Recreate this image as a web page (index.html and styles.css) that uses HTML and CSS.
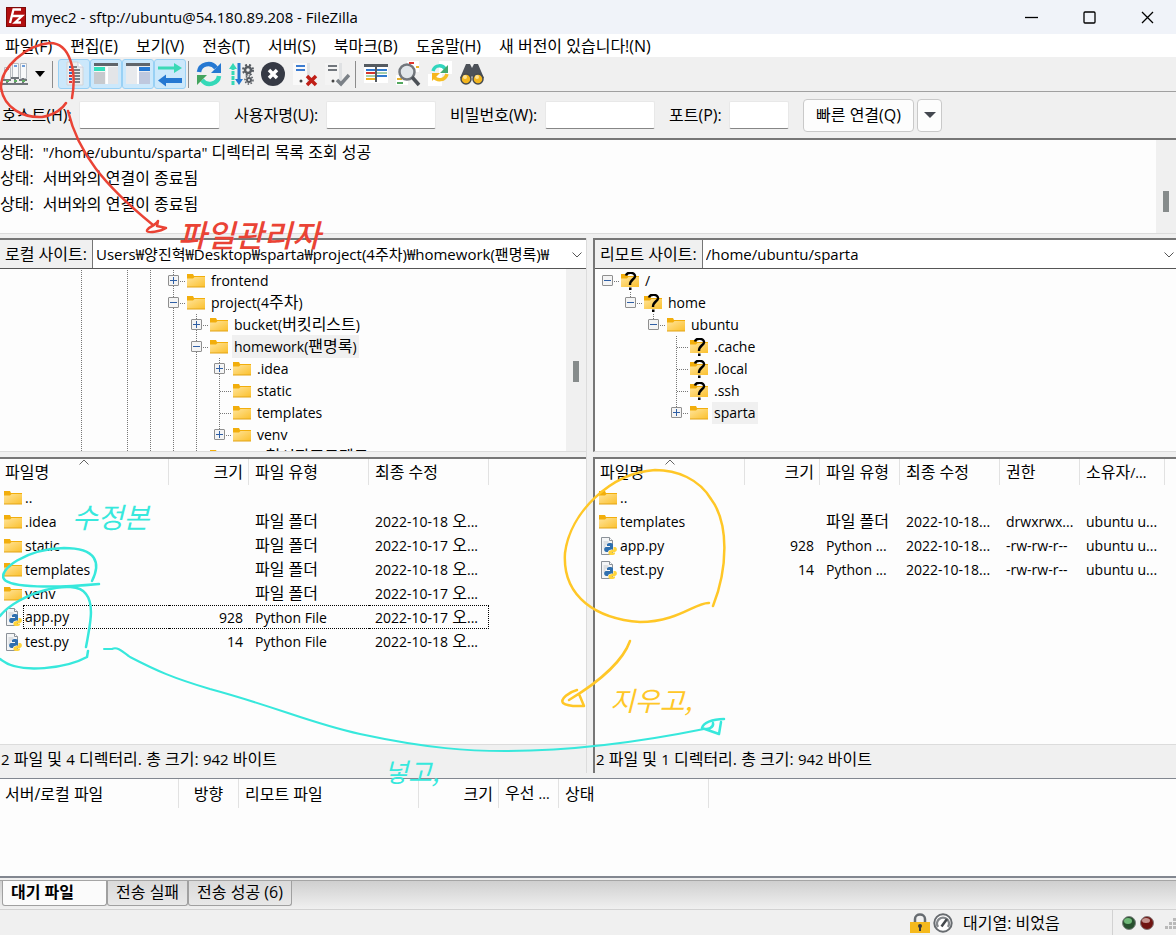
FILE: index.html
```html
<!DOCTYPE html>
<html lang="ko">
<head>
<meta charset="utf-8">
<title>myec2 - FileZilla</title>
<link rel="stylesheet" href="styles.css">
</head>
<body>
<svg class="defs" aria-hidden="true">
  <defs>
    <linearGradient id="fold" x1="0" y1="0" x2="1" y2="1"><stop offset="0" stop-color="#ffe49a"/><stop offset="1" stop-color="#fbc02d"/></linearGradient>
  </defs>
  <symbol id="i-folder" viewBox="0 0 18 16"><path d="M0 1h6l1 2h11v3H0z" fill="#f2ae0c"/><path d="M0 5.500h6l1.500-1.500H18V14H0z" fill="url(#fold)"/><path d="M0 14h18" stroke="#e3a417" stroke-width="1"/></symbol>
  <symbol id="i-unknown" viewBox="0 0 18 18"><path d="M0 2h6l1 2h11v3H0z" fill="#f2ae0c"/><path d="M0 6.500h6L7.500 5H18v10H0z" fill="url(#fold)"/><path d="M5 3.500C6 -.5 14.500 0 14 4.500C13.500 7.500 9 7.500 9 13" fill="none" stroke="#000" stroke-width="2.400"/><path d="M8 15.500h2.500v2.500H8z"/></symbol>
  <symbol id="i-python" viewBox="0 0 18 18"><path d="M2.500.5h8l3 3v14h-11z" fill="#f4f5f6" stroke="#8b9198"/><path d="M10.500.5v3h3" fill="#fff" stroke="#8b9198"/><path d="M4.500 5h5M4.500 7h4M4.500 9h2M4.500 11h2" stroke="#c5c9cd"/><path d="M8 7.500c0-2 6-2 6 0v4c0 1.500-5 .5-5 3.500H7.500C4.500 15 4.500 10.500 7 10h4V9H8z" fill="#2f6fae"/><path d="M14.500 10H16c2.500 0 2.500 4.500 0 5h-3v.6h3v1c0 2-6.500 2-6.500 0v-1.500c0-2.500 5-1.500 5-3.100z" fill="#ffd43b"/></symbol>
</svg>

<header class="titlebar">
  <svg class="logo" width="20" height="20" viewBox="0 0 20 20"><rect width="20" height="20" fill="#b30f10"/><rect x=".5" y=".5" width="19" height="19" fill="none" stroke="#7e0a0a"/><path d="M15 2.500H7.500L4 16M5.500 9h6M10 9h6l-7 6.500h6" fill="none" stroke="#fff" stroke-width="2.300"/></svg>
  <h1>myec2 - sftp://ubuntu@54.180.89.208 - FileZilla</h1>
  <div class="window-buttons">
    <button aria-label="최소화"><svg width="13" height="13" viewBox="0 0 13 13"><path d="M0 6.500h13"/></svg></button>
    <button aria-label="최대화"><svg width="13" height="13" viewBox="0 0 13 13"><rect x="1" y="1" width="11" height="11" rx="1"/></svg></button>
    <button aria-label="닫기"><svg width="13" height="13" viewBox="0 0 13 13"><path d="M1 1l11 11M12 1L1 12"/></svg></button>
  </div>
</header>

<nav class="menubar">
  <button>파일(F)</button>
  <button>편집(E)</button>
  <button>보기(V)</button>
  <button>전송(T)</button>
  <button>서버(S)</button>
  <button>북마크(B)</button>
  <button>도움말(H)</button>
  <button>새 버전이 있습니다!(N)</button>
</nav>

<div class="toolbar">
  <button class="site" aria-label="사이트 관리자"><svg width="26" height="26" viewBox="0 0 26 26"><g fill="#f8f9fa" stroke="#b9bdc2"><path d="M2.500 6.500h6v12h-6zM10.500 2.500h6v14h-6zM18.500 2.500h6v15h-6z"/></g><path d="M4 8h3M12 5h3M20 5h3" stroke="#3f7fd0" stroke-width="1.500"/><path d="M5 18v5M13 16v7M21 17v6M0 23h26M1 19h8M9 17h8M17 19h8" stroke="#70757a" stroke-width="2"/><path d="M4 20h3M12 20h3M20 20h3" stroke="#60ad62" stroke-width="2"/></svg></button>
  <button class="caret" aria-label="사이트 목록"><svg width="10" height="6" viewBox="0 0 10 6"><path d="M0 0h10L5 6z"/></svg></button>
  <span class="sep"></span>
  <button class="tool on" aria-label="메시지 로그"><svg width="26" height="26" viewBox="0 0 26 26"><path d="M6 1h11l5 5v18H6z" fill="#eceef0" stroke="#d0d4d8"/><path d="M17 1v5h5" fill="#fff" stroke="#ccd"/><path d="M8 6h3M8 12h3M8 18h3" stroke="#2b73c4" stroke-width="2"/><path d="M8 9h3M8 15h3M8 21h3" stroke="#d33" stroke-width="2"/><path d="M12 6h4M12 9h7M12 12h7M12 15h7M12 18h7M12 21h7" stroke="#555b61" stroke-width="1.500"/></svg></button>
  <button class="tool on" aria-label="로컬 트리"><svg width="26" height="26" viewBox="0 0 26 26"><rect x="1" y="2" width="24" height="21" fill="#f5f5f5"/><path d="M1 2h24v3H1z" fill="#5f656b"/><path d="M1 6h11v4H1z" fill="#35e0bd"/><path d="M1 11h11v12H1z" fill="#c7cace"/><path d="M13 6h12v17H13z" fill="#e3e5e8"/><path d="M14 6v17" stroke="#fff" stroke-width="2"/></svg></button>
  <button class="tool on" aria-label="원격 트리"><svg width="26" height="26" viewBox="0 0 26 26"><rect x="1" y="2" width="24" height="21" fill="#e8eaed"/><path d="M1 2h24v3H1z" fill="#5f656b"/><path d="M14 6h11v4H14z" fill="#2578d2"/><path d="M14 11h11v12H14z" fill="#bfc8de"/><path d="M13 6v17" stroke="#fff" stroke-width="2"/></svg></button>
  <button class="tool on" aria-label="전송 대기열"><svg width="26" height="26" viewBox="0 0 26 26"><path d="M1 5.500h16V2l8 5-8 5V8.500H1z" fill="#3bd9b6"/><path d="M25 17H9v-3.500l-8 6 8 6V22h16z" fill="#2578d2"/></svg></button>
  <span class="sep"></span>
  <button class="tool" aria-label="새로 고침"><svg width="26" height="26" viewBox="0 0 26 26"><path d="M3 11C4 3 15 0 20 7" fill="none" stroke="#2578d2" stroke-width="4.500"/><path d="M25 2v10H15z" fill="#2578d2"/><path d="M23 15c-1 8-12 11-17 4" fill="none" stroke="#35d9b8" stroke-width="4.500"/><path d="M1 24V14h10z" fill="#44a55e"/></svg></button>
  <button class="tool" aria-label="대기열 처리"><svg width="26" height="26" viewBox="0 0 26 26"><path d="M5 24V6" stroke="#35d9b6" stroke-width="3" stroke-dasharray="4 1"/><path d="M1 8l4-6 4 6z" fill="#35d9b6"/><path d="M11 2v17" stroke="#2578d2" stroke-width="3"/><path d="M7 18h8l-4 6z" fill="#2578d2"/><g fill="none" stroke="#565b61"><circle cx="20" cy="9" r="3" stroke-width="2.500"/><circle cx="20" cy="9" r="5" stroke-width="2" stroke-dasharray="2 2"/><circle cx="21" cy="19" r="2" stroke-width="2"/><circle cx="21" cy="19" r="4" stroke-width="1.500" stroke-dasharray="1.500 1.500"/></g></svg></button>
  <button class="tool" aria-label="취소"><svg width="26" height="26" viewBox="0 0 26 26"><circle cx="13" cy="13" r="12" fill="#363a45"/><path d="M9 9l8 8M17 9l-8 8" stroke="#fff" stroke-width="3.500"/></svg></button>
  <button class="tool" aria-label="연결 끊기"><svg width="26" height="26" viewBox="0 0 26 26"><path d="M1 2h17v22H1z" fill="#f9f9f9"/><path d="M15 2h3v22h-3z" fill="#e0e2e4"/><path d="M4 5h9M4 9h9" stroke="#3b7bd0" stroke-width="2"/><circle cx="9" cy="20" r="1.500" fill="#444"/><path d="M15 15l9 9M24 15l-9 9" stroke="#c01f17" stroke-width="3.500"/></svg></button>
  <button class="tool" aria-label="다시 연결"><svg width="26" height="26" viewBox="0 0 26 26"><path d="M1 2h17v22H1z" fill="#f4f4f4"/><path d="M15 2h3v22h-3z" fill="#dfe1e3"/><path d="M4 5h9M4 9h9" stroke="#71767c" stroke-width="2"/><circle cx="9" cy="20" r="1.500" fill="#444"/><path d="M13 19l4 4 8-9" fill="none" stroke="#7b8187" stroke-width="3.500"/></svg></button>
  <span class="sep"></span>
  <button class="tool" aria-label="필터"><svg width="26" height="26" viewBox="0 0 26 26"><path d="M1 3h24v19H1z" fill="#fff"/><path d="M1 3h24v3H1z" fill="#555b61"/><path d="M3 9h9M14 9h10M14 15h10" stroke="#2f79cf" stroke-width="2"/><path d="M3 12h9" stroke="#d5352d" stroke-width="2"/><path d="M3 18h9" stroke="#f0b020" stroke-width="2"/><path d="M3 15h9M14 12h10" stroke="#4a9e5b" stroke-width="1"/><path d="M13 3v18" stroke="#555b61" stroke-width="2"/></svg></button>
  <button class="tool" aria-label="디렉터리 비교"><svg width="26" height="26" viewBox="0 0 26 26"><path d="M12 0h12v11H12zM1 14h12v10H1z" fill="#fff"/><path d="M14 2h5" stroke="#e0352d" stroke-width="2"/><path d="M21 6h3M2 18h5" stroke="#eab22b" stroke-width="2"/><path d="M2 22h6" stroke="#53a85f" stroke-width="2"/><circle cx="12" cy="11" r="7.500" fill="#e1e6ea" stroke="#72777d" stroke-width="2.500"/><path d="M17 16l7 8" stroke="#4c5157" stroke-width="3.500"/></svg></button>
  <button class="tool" aria-label="동기화 탐색"><svg width="26" height="26" viewBox="0 0 26 26"><path d="M12 0h13v13H12zM1 13h14v12H1z" fill="#fff"/><path d="M6 10c2-7 10-6 12-2" fill="none" stroke="#31d6be" stroke-width="3.500"/><path d="M21 4v8h-8z" fill="#44aa70"/><path d="M20 13c-2 7-10 7-13 3" fill="none" stroke="#f6bf26" stroke-width="3.500"/><path d="M5 20v-8h8z" fill="#f6b51d"/></svg></button>
  <button class="tool" aria-label="파일 찾기"><svg width="26" height="26" viewBox="0 0 26 26"><path d="M1 17L7 3h4l2 4 2-4h4l6 14-8 3-4-5-4 5z" fill="#4c5158"/><circle cx="7" cy="18" r="5" fill="#f3b61f" stroke="#454a50" stroke-width="1.500"/><circle cx="19" cy="18" r="5" fill="#f3b61f" stroke="#454a50" stroke-width="1.500"/><circle cx="6" cy="16" r="2" fill="#ffe394"/><circle cx="18" cy="16" r="2" fill="#ffe394"/></svg></button>
</div>

<form class="quick">
  <label class="l1" for="host">호스트(H):</label><input id="host" class="w-host" type="text">
  <label class="l2" for="user">사용자명(U):</label><input id="user" class="w-mid" type="text">
  <label class="l3" for="pass">비밀번호(W):</label><input id="pass" class="w-mid" type="password">
  <label class="l4" for="port">포트(P):</label><input id="port" class="w-port" type="text">
  <button type="button" class="connect">빠른 연결(Q)</button>
  <button type="button" class="history" aria-label="최근 서버"><svg width="12" height="6" viewBox="0 0 12 6"><path d="M0 0h12L6 6z" fill="#444850"/></svg></button>
</form>

<section class="log" aria-label="메시지 로그">
  <div class="log-lines">
    <p><span>상태:</span><span><span class="en15">"/home/ubuntu/sparta"</span> 디렉터리 목록 조회 성공</span></p>
    <p><span>상태:</span><span>서버와의 연결이 종료됨</span></p>
    <p><span>상태:</span><span>서버와의 연결이 종료됨</span></p>
  </div>
  <div class="scroll low"><i></i></div>
</section>

<main class="panes">
  <section class="pane">
    <div class="site-box">
      <div class="address">
        <label for="local">로컬 사이트:</label>
        <select id="local"><option>Users₩양진혁₩Desktop₩sparta₩project(4주차)₩homework(팬명록)₩</option></select>
        <svg width="10" height="6" viewBox="0 0 10 6"><path d="M.5.500L5 5 9.500.5"/></svg>
      </div>
      <div class="tree-wrap">
        <ul class="tree local">
          <li><b class="v"></b><b></b><b class="v"></b><b class="v"></b><b class="v h"><button class="plus" aria-label="펼치기"></button></b><svg class="ic"><use href="#i-folder"/></svg><span class="en">frontend</span></li>
          <li><b class="v"></b><b></b><b class="v"></b><b class="v"></b><b class="v h"><button aria-label="접기"></button></b><svg class="ic"><use href="#i-folder"/></svg><span><span class="en">project(4</span>주차<span class="en">)</span></span></li>
          <li><b class="v"></b><b></b><b class="v"></b><b class="v"></b><b class="v"></b><b class="v h"><button class="plus" aria-label="펼치기"></button></b><svg class="ic"><use href="#i-folder"/></svg><span><span class="en">bucket(</span>버킷리스트<span class="en">)</span></span></li>
          <li><b class="v"></b><b></b><b class="v"></b><b class="v"></b><b class="v"></b><b class="v h"><button aria-label="접기"></button></b><svg class="ic"><use href="#i-folder"/></svg><span class="sel"><span class="en">homework(</span>팬명록<span class="en">)</span></span></li>
          <li><b class="v"></b><b></b><b class="v"></b><b class="v"></b><b class="v"></b><b class="v"></b><b class="v h"><button class="plus" aria-label="펼치기"></button></b><svg class="ic"><use href="#i-folder"/></svg><span class="en">.idea</span></li>
          <li><b class="v"></b><b></b><b class="v"></b><b class="v"></b><b class="v"></b><b class="v"></b><b class="v h"></b><svg class="ic"><use href="#i-folder"/></svg><span class="en">static</span></li>
          <li><b class="v"></b><b></b><b class="v"></b><b class="v"></b><b class="v"></b><b class="v"></b><b class="v h"></b><svg class="ic"><use href="#i-folder"/></svg><span class="en">templates</span></li>
          <li><b class="v"></b><b></b><b class="v"></b><b class="v"></b><b class="v"></b><b class="v"></b><b class="end h"><button class="plus" aria-label="펼치기"></button></b><svg class="ic"><use href="#i-folder"/></svg><span class="en">venv</span></li>
          <li><b class="v"></b><b></b><b class="v"></b><b class="v"></b><b class="v"></b><b class="end h"></b><svg class="ic"><use href="#i-folder"/></svg><span><span class="en">aws_</span>첫시작프로젝트</span></li>
        </ul>
        <div class="scroll mid"><i></i></div>
      </div>
    </div>
    <div class="list-box">
      <div class="list">
        <table class="files t-local">
          <colgroup><col class="c169"><col class="c80"><col class="c120"><col class="c120"></colgroup>
          <thead><tr><th>파일명<svg class="sort" width="10" height="6" viewBox="0 0 10 6"><path d="M.5 5.500L5 1l4.500 4.500"/></svg></th><th class="num">크기</th><th>파일 유형</th><th>최종 수정</th></tr></thead>
          <tbody>
            <tr><td><svg class="ic"><use href="#i-folder"/></svg><span class="en">..</span></td><td></td><td></td><td></td></tr>
            <tr><td><svg class="ic"><use href="#i-folder"/></svg><span class="en">.idea</span></td><td></td><td>파일 폴더</td><td><span class="en">2022-10-18</span> 오<span class="en">...</span></td></tr>
            <tr><td><svg class="ic"><use href="#i-folder"/></svg><span class="en">static</span></td><td></td><td>파일 폴더</td><td><span class="en">2022-10-17</span> 오<span class="en">...</span></td></tr>
            <tr><td><svg class="ic"><use href="#i-folder"/></svg><span class="en">templates</span></td><td></td><td>파일 폴더</td><td><span class="en">2022-10-18</span> 오<span class="en">...</span></td></tr>
            <tr><td><svg class="ic"><use href="#i-folder"/></svg><span class="en">venv</span></td><td></td><td>파일 폴더</td><td><span class="en">2022-10-17</span> 오<span class="en">...</span></td></tr>
            <tr class="focus"><td><svg class="ic"><use href="#i-python"/></svg><span class="en">app.py</span></td><td class="num"><span class="en">928</span></td><td><span class="en">Python File</span></td><td><span class="en">2022-10-17</span> 오<span class="en">...</span></td></tr>
            <tr><td><svg class="ic"><use href="#i-python"/></svg><span class="en">test.py</span></td><td class="num"><span class="en">14</span></td><td><span class="en">Python File</span></td><td><span class="en">2022-10-18</span> 오<span class="en">...</span></td></tr>
          </tbody>
        </table>
      </div>
      <p class="summary"><span class="en15">2</span> 파일 및 <span class="en15">4</span> 디렉터리. 총 크기: <span class="en15">942</span> 바이트</p>
    </div>
  </section>

  <section class="pane remote">
    <div class="site-box">
      <div class="address">
        <label for="remote">리모트 사이트:</label>
        <select id="remote"><option>/home/ubuntu/sparta</option></select>
        <svg width="10" height="6" viewBox="0 0 10 6"><path d="M.5.500L5 5 9.500.5"/></svg>
      </div>
      <div class="tree-wrap">
        <ul class="tree">
          <li><b class="h"><button aria-label="접기"></button></b><svg class="ic"><use href="#i-unknown"/></svg><span class="en">/</span></li>
          <li><b></b><b class="end h"><button aria-label="접기"></button></b><svg class="ic"><use href="#i-unknown"/></svg><span class="en">home</span></li>
          <li><b></b><b></b><b class="end h"><button aria-label="접기"></button></b><svg class="ic"><use href="#i-folder"/></svg><span class="en">ubuntu</span></li>
          <li><b></b><b></b><b></b><b class="v h"></b><svg class="ic"><use href="#i-unknown"/></svg><span class="en">.cache</span></li>
          <li><b></b><b></b><b></b><b class="v h"></b><svg class="ic"><use href="#i-unknown"/></svg><span class="en">.local</span></li>
          <li><b></b><b></b><b></b><b class="v h"></b><svg class="ic"><use href="#i-unknown"/></svg><span class="en">.ssh</span></li>
          <li><b></b><b></b><b></b><b class="end h"><button class="plus" aria-label="펼치기"></button></b><svg class="ic"><use href="#i-folder"/></svg><span class="en sel">sparta</span></li>
        </ul>
      </div>
    </div>
    <div class="list-box">
      <div class="list">
        <table class="files t-remote">
          <colgroup><col class="c150"><col class="c75"><col class="c80"><col class="c100"><col class="c80"><col class="c85"></colgroup>
          <thead><tr><th>파일명<svg class="sort" width="10" height="6" viewBox="0 0 10 6"><path d="M.5 5.500L5 1l4.500 4.500"/></svg></th><th class="num">크기</th><th>파일 유형</th><th>최종 수정</th><th>권한</th><th>소유자<span class="en">/...</span></th></tr></thead>
          <tbody>
            <tr><td><svg class="ic"><use href="#i-folder"/></svg><span class="en">..</span></td><td></td><td></td><td></td><td></td><td></td></tr>
            <tr><td><svg class="ic"><use href="#i-folder"/></svg><span class="en">templates</span></td><td></td><td>파일 폴더</td><td><span class="en">2022-10-18...</span></td><td><span class="en">drwxrwx...</span></td><td><span class="en">ubuntu u...</span></td></tr>
            <tr><td><svg class="ic"><use href="#i-python"/></svg><span class="en">app.py</span></td><td class="num"><span class="en">928</span></td><td><span class="en">Python ...</span></td><td><span class="en">2022-10-18...</span></td><td><span class="en">-rw-rw-r--</span></td><td><span class="en">ubuntu u...</span></td></tr>
            <tr><td><svg class="ic"><use href="#i-python"/></svg><span class="en">test.py</span></td><td class="num"><span class="en">14</span></td><td><span class="en">Python ...</span></td><td><span class="en">2022-10-18...</span></td><td><span class="en">-rw-rw-r--</span></td><td><span class="en">ubuntu u...</span></td></tr>
          </tbody>
        </table>
      </div>
      <p class="summary"><span class="en15">2</span> 파일 및 <span class="en15">1</span> 디렉터리. 총 크기: <span class="en15">942</span> 바이트</p>
    </div>
  </section>
</main>

<section class="queue">
  <table class="files t-queue">
    <colgroup><col class="c179"><col class="c60"><col class="c180"><col class="c80"><col class="c60"><col class="c150"></colgroup>
    <thead><tr><th>서버/로컬 파일</th><th class="mid">방향</th><th>리모트 파일</th><th class="num">크기</th><th>우선 <span class="en">...</span></th><th>상태</th></tr></thead>
  </table>
</section>

<div class="tabs" role="tablist">
  <button role="tab" aria-selected="true">대기 파일</button>
  <button role="tab" aria-selected="false">전송 실패</button>
  <button role="tab" aria-selected="false">전송 성공 (6)</button>
</div>

<footer class="statusbar">
  <svg width="20" height="20" viewBox="0 0 20 20"><path d="M5 9V6c0-6 10-6 10 0v3" fill="none" stroke="#666b70" stroke-width="2.500"/><path d="M0 9h20v11H0z" fill="#f5b91c"/><circle cx="10" cy="13" r="2" fill="#3b3b3b"/><path d="M10 13v5" stroke="#3b3b3b" stroke-width="2"/></svg>
  <svg width="20" height="20" viewBox="0 0 20 20"><circle cx="10" cy="10" r="8.700" fill="#fff" stroke="#686c70" stroke-width="2"/><path d="M5 14A6 6 0 1 1 15 14" fill="none" stroke="#85898d" stroke-width="2.500"/><path d="M8.500 13.500L14 6" stroke="#44484c" stroke-width="2.500"/></svg>
  <span class="queue-state">대기열: 비었음</span>
  <span class="lights">
    <svg width="14" height="14" viewBox="0 0 14 14"><circle cx="7" cy="7" r="6.500" fill="#28502f" stroke="#7d8280"/><ellipse cx="6" cy="5" rx="4" ry="3" fill="#6fb878"/></svg>
    <svg width="14" height="14" viewBox="0 0 14 14"><circle cx="7" cy="7" r="6.500" fill="#701512" stroke="#857a7a"/><ellipse cx="6" cy="4.500" rx="4" ry="2.500" fill="#c59590"/></svg>
  </span>
  <svg width="12" height="12" viewBox="0 0 12 12"><path d="M9 1h3v3H9zM5 5h3v3H5zM9 5h3v3H9zM1 9h3v3H1zM5 9h3v3H5zM9 9h3v3H9z" fill="#b9b9b9"/></svg>
</footer>

<svg class="notes" width="760" height="820" viewBox="0 0 760 820">
  <g stroke="#ea4335" stroke-width="2.500">
    <path d="M72 98C77 71 70 43 50 43C26 45 0 68 1 88C4 108 23 118 42 117C55 115 63 108 66 103"/>
    <path d="M68 111C78 153 104 185 153 225M158 221L157 226L166 228C160 232 148 233 147 231C146 228 155 226 158 221"/>
  </g>
  <text class="ink red" x="178" y="247">파일관리자</text>
  <g stroke="#37e8dc" stroke-width="2.500">
    <path d="M92 581C101 563 97 548 64 548C25 549-2 570 4 579C10 588 55 588 99 584"/>
    <path d="M0 616C18 593 75 577 86 594C94 604 91 621 86 647M0 659C20 676 69 667 87 657L88 651"/>
    <path stroke-width="2" d="M104 649L112 649C118 646 124 653 130 657C157 671 173 678 210 689C280 708 310 723 360 734C430 749 470 751 505 751C570 751 640 742 704 729"/>
    <path d="M724 719C712 719 703 723 702 728C708 731 714 727 713 723M702 728L719 734L721 722"/>
  </g>
  <text class="ink teal" x="72" y="528">수정본</text>
  <text class="ink teal small" x="384" y="782">넣고,</text>
  <g stroke="#ffc727" stroke-width="2.500">
    <path d="M713 606C728 568 729 523 711 499C699 479 677 470 655 470C610 473 570 513 565 553C562 598 598 619 640 622C678 622 696 602 709 603"/>
    <path d="M630 641C624 658 604 679 569 700M577 690C569 692 560 699 563 703C568 707 576 706 584 706L579 694"/>
  </g>
  <text class="ink gold" x="610" y="711">지우고,</text>
</svg>
</body>
</html>
```
FILE: styles.css
```css
* { box-sizing: border-box; }
body {
  margin: 0;
  min-height: 100vh;
  display: flex;
  flex-direction: column;
  position: relative;
  overflow-x: hidden;
  background: #f0f0f0;
  color: #000;
  font: 16px/20px "Open Sans", "Noto Sans CJK KR", sans-serif;
}
p, ul, h1 { margin: 0; padding: 0; }
button, input, select { font: inherit; color: inherit; }
button { border: 0; padding: 0; background: none; white-space: nowrap; }
svg { display: block; flex: none; }
.en { font-size: 14px; }
.en15 { font-size: 15px; }
.defs { position: absolute; width: 0; height: 0; }

.titlebar { height: 34px; display: flex; align-items: center; padding-left: 6px; background: #f0f3f9; }
.titlebar h1 { flex: 1; margin-left: 5px; font-size: 15px; font-weight: 400; }
.window-buttons { display: flex; }
.window-buttons button { width: 58px; height: 30px; display: flex; justify-content: center; align-items: center; }
.window-buttons svg { fill: none; stroke: #000; stroke-width: 1.3; }

.menubar { height: 23px; display: flex; align-items: center; gap: 18px; padding-left: 5px; background: #fff; }

.toolbar { height: 35px; display: flex; align-items: center; border-bottom: 1px solid #a0a0a0; }
.toolbar button { height: 30px; display: flex; align-items: center; justify-content: center; }
.site { width: 30px; }
.caret { width: 20px; }
.tool { width: 32px; border: 1px solid transparent; border-radius: 3px; }
.tool.on { background: #cce8fb; border-color: #99d1f5; }
.sep { width: 1px; height: 27px; margin: 0 5px 0 2px; background: #8c8c8c; }
.sep ~ .sep { margin-right: 4px; }

.quick { height: 46px; display: flex; align-items: center; padding-left: 2px; }
.quick label { white-space: nowrap; }
.quick input { height: 28px; margin-right: 14px; border: 1px solid #e8e8e8; border-bottom-color: #868686; border-radius: 2px; background: #fff; }
.l1 { width: 77px; }
.l2 { width: 92px; }
.l3 { width: 95px; }
.l4 { width: 60px; }
.w-host { width: 141px; }
.w-mid { width: 110px; }
.w-port { width: 60px; }
.connect, .history { height: 33px; border: 1px solid #c9c9c9; border-radius: 4px; background: #fdfdfd; display: flex; align-items: center; justify-content: center; }
.connect { width: 111px; margin-right: 3px; }
.history { width: 25px; }

.log { height: 96px; display: flex; border-top: 2px solid #767676; border-bottom: 1px solid #dcdcdc; background: #fdfdfd; }
.log-lines { flex: 1; }
.log p { display: flex; gap: 9px; height: 26px; line-height: 25px; }
.scroll { width: 20px; background: #f0f0f0; display: flex; flex-direction: column; align-items: center; }
.scroll i { width: 6px; height: 21px; background: #868b8b; }
.low { padding-top: 51px; }
.mid { padding-top: 92px; }

.panes { flex: 1; margin-top: 4px; display: grid; grid-template-columns: 587fr 583fr; gap: 6px; }
.pane { min-width: 0; display: flex; flex-direction: column; gap: 5px; border-right: 1px solid #dcdcdc; }
.remote { border-right: 0; }
.remote .site-box, .remote .list-box { border-left: 2px solid #767676; }
.site-box { border-top: 2px solid #767676; border-bottom: 1px solid #dcdcdc; background: #fdfdfd; }
.address { height: 29px; display: flex; align-items: center; position: relative; border-bottom: 1px solid #555; }
.address label { align-self: stretch; display: flex; align-items: center; padding: 0 5px; border-right: 1px solid #767676; background: #f0f0f0; white-space: nowrap; }
.address select { flex: 1; min-width: 0; height: 28px; padding: 0 24px 0 3px; border: 0; background: #fff; appearance: none; font-size: 15px; }
.address svg { position: absolute; right: 4px; top: 12px; fill: none; stroke: #555; }
.remote .address svg { right: 2px; }
.tree-wrap { height: 182px; display: flex; overflow: hidden; }
.tree { flex: 1; list-style: none; }
.tree.local { padding-left: 70px; }
.remote .tree { padding-left: 1px; }
.tree li { height: 22px; padding-top: 1px; display: flex; align-items: center; white-space: nowrap; }
.tree b { flex: none; width: 23px; height: 22px; display: flex; align-items: center; padding-left: 6px; background-repeat: no-repeat; }
.tree .v { background-image: repeating-linear-gradient(#777 0 1px, transparent 1px 2px); background-size: 1px 100%; background-position: 11px 0; }
.tree .h { background-image: repeating-linear-gradient(90deg, #777 0 1px, transparent 1px 2px); background-size: 11px 1px; background-position: 12px 11px; }
.tree .v.h, .tree .end { background-image: repeating-linear-gradient(#777 0 1px, transparent 1px 2px), repeating-linear-gradient(90deg, #777 0 1px, transparent 1px 2px); background-position: 11px 0, 12px 11px; }
.tree .v.h { background-size: 1px 100%, 11px 1px; }
.tree .end { background-size: 1px 11px, 11px 1px; }
.tree button { width: 11px; height: 11px; border: 1px solid #8f8f8f; border-radius: 1px; background: linear-gradient(#2f5fa5, #2f5fa5) center / 7px 1px no-repeat, #f4f4f4; }
.tree .plus { background: linear-gradient(#2f5fa5, #2f5fa5) center / 7px 1px no-repeat, linear-gradient(#2f5fa5, #2f5fa5) center / 1px 7px no-repeat, #f4f4f4; }
.ic { width: 18px; height: 18px; }
.tree .ic { margin: 0 4px 0 2px; }
.tree li > span { padding: 0 2px; line-height: 22px; }
.tree .sel { background: #f0f0f0; }

.list-box { flex: 1; display: flex; flex-direction: column; border-top: 2px solid #767676; background: #fdfdfd; }
.list { flex: 1; overflow: hidden; }
.files { table-layout: fixed; border-collapse: separate; border-spacing: 0; white-space: nowrap; }
.t-local { width: 489px; }
.t-remote { width: 570px; }
.t-queue { width: 709px; }
.c169 { width: 169px; } .c80 { width: 80px; } .c120 { width: 120px; } .c150 { width: 150px; } .c75 { width: 75px; }
.c100 { width: 100px; } .c85 { width: 85px; } .c179 { width: 179px; } .c60 { width: 60px; } .c180 { width: 180px; }
th { position: relative; height: 26px; padding: 0 6px; border-right: 1px solid #e2e2e2; font-weight: 400; text-align: left; }
td { height: 24px; padding: 0 6px; }
th:first-child { padding-left: 5px; }
.num { text-align: right; padding-right: 5px; }
td.num { padding-right: 6px; }
th.mid { padding: 0; text-align: center; }
.sort { position: absolute; left: 50%; top: 0; margin-left: -5px; fill: none; stroke: #666; }
td:first-child { padding-left: 4px; }
td .ic { display: inline-block; vertical-align: middle; margin-right: 3px; }
.focus td { border: dotted #000; border-width: 1px 0; }
.focus td:last-child { border-right-width: 1px; }
.focus td:first-child { padding: 0 0 0 4px; border: 0; }
.focus td:first-child span { display: inline-block; width: 146px; height: 24px; margin-left: -2px; padding: 1px 0 0 1px; border: dotted #000; border-width: 1px 0 1px 1px; vertical-align: middle; }
.summary { height: 29px; padding: 4px 1px; border-top: 1px solid #dcdcdc; background: #f0f0f0; white-space: nowrap; }

.queue { height: 100px; margin-top: 5px; border-top: 1px solid #828790; border-bottom: 2px solid #828790; background: #fdfdfd; }
.queue th { height: 29px; }

.tabs { height: 30px; margin-top: 2px; padding-left: 2px; display: flex; align-items: flex-start; border-top: 1px solid #a5a5a5; border-bottom: 1px solid #d2d2d2; background: linear-gradient(#cfcfcf, #f0f0f0); }
.tabs button { height: 25px; padding: 0 8px 3px; border: 1px solid #a0a0a0; border-top: 0; border-radius: 0 0 3px 3px; background: linear-gradient(#dadada, #e8e8e8); }
.tabs [aria-selected="true"] { padding-right: 32px; background: #fbfbfb; font-weight: 700; }

.statusbar { height: 25px; display: flex; align-items: center; justify-content: flex-end; gap: 3px; overflow: hidden; }
.queue-state { margin-left: 7px; width: 146px; white-space: nowrap; }
.lights { align-self: stretch; display: flex; align-items: center; gap: 4px; padding: 0 7px 0 9px; border-left: 1px solid #d2d2d2; }

.notes { position: absolute; left: 0; top: 0; fill: none; stroke-linecap: round; stroke-linejoin: round; pointer-events: none; }
.ink { font: italic 400 31px "Noto Sans CJK KR", sans-serif; }
.red { fill: #ea4335; font-weight: 500; }
.teal { fill: #37e8dc; font-size: 28px; }
.gold { fill: #ffc727; font-size: 27px; }
.small { font-size: 26px; }
```
